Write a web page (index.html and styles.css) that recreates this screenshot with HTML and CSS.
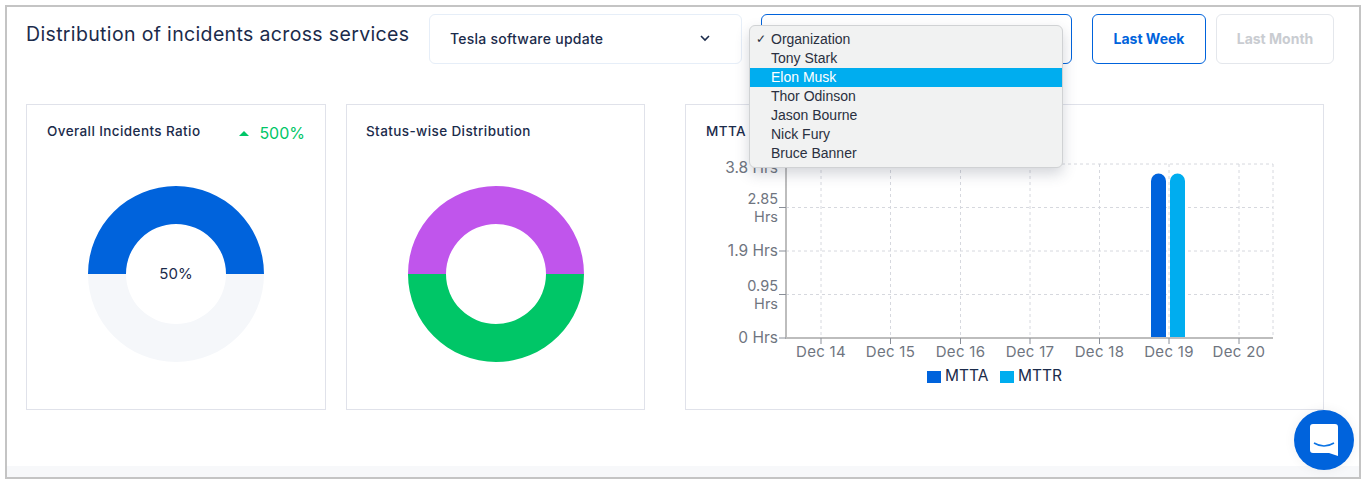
FILE: index.html
```html
<!DOCTYPE html>
<html lang="en">
<head>
  <meta charset="UTF-8">
  <title>Distribution of incidents across services</title>
  <link rel="stylesheet" href="styles.css">
</head>
<body>
<div class="frame">
  <div class="header">
    <h2 class="page-title">Distribution of incidents across services</h2>
    <div class="select select-service">
      <span>Tesla software update</span>
      <svg class="chevron" width="10" height="7" viewBox="0 0 10 7"><path d="M1 1l4 4 4-4" fill="none" stroke="#1b2b4b" stroke-width="1.6"/></svg>
    </div>
    <div class="select select-owner"></div>
    <button class="range range-active">Last Week</button>
    <button class="range">Last Month</button>
  </div>

  <ul class="popup">
    <li class="option option-checked">Organization</li>
    <li class="option">Tony Stark</li>
    <li class="option option-hover">Elon Musk</li>
    <li class="option">Thor Odinson</li>
    <li class="option">Jason Bourne</li>
    <li class="option">Nick Fury</li>
    <li class="option">Bruce Banner</li>
  </ul>

  <div class="cards">
    <div class="card card-ratio">
      <div class="card-head">
        <h3 class="card-title">Overall Incidents Ratio</h3>
        <span class="trend"><i class="trend-arrow"></i>500%</span>
      </div>
      <svg class="donut" width="176" height="176" viewBox="0 0 176 176">
        <path d="M0 88a88 88 0 0 1 176 0H138a50 50 0 0 0-100 0z" fill="#0063dc"/>
        <path d="M0 88a88 88 0 0 0 176 0H138a50 50 0 0 1-100 0z" fill="#f5f7fa"/>
        <text x="88" y="93" text-anchor="middle" class="donut-label">50%</text>
      </svg>
    </div>
    <div class="card card-status">
      <div class="card-head">
        <h3 class="card-title">Status-wise Distribution</h3>
      </div>
      <svg class="donut" width="176" height="176" viewBox="0 0 176 176">
        <path d="M0 88a88 88 0 0 1 176 0H138a50 50 0 0 0-100 0z" fill="#c055ec"/>
        <path d="M0 88a88 88 0 0 0 176 0H138a50 50 0 0 1-100 0z" fill="#00c667"/>
      </svg>
    </div>
    <div class="card card-trend">
      <div class="card-head">
        <h3 class="card-title">MTTA</h3>
      </div>
      <svg class="bars" width="630" height="240" viewBox="690 150 630 240">
        <g class="grid">
          <path d="M786 164H1273M786 207.500H1273M786 251H1273M786 294.500H1273"/>
          <path d="M821 164V338M890.500 164V338M960.500 164V338M1030 164V338M1099.500 164V338M1169 164V338M1239 164V338M1273 164V338"/>
        </g>
        <path class="axis" d="M786 164V338H1273"/>
        <path class="ticks" d="M779 164H786M779 207.500H786M779 251H786M779 294.500H786M779 338H786M821 338V344M890.500 338V344M960.500 338V344M1030 338V344M1099.500 338V344M1169 338V344M1239 338V344"/>
        <path d="M1151 337V181a7.500 7.500 0 0 1 15 0V337z" fill="#0063dc"/>
        <path d="M1170 337V181a7.500 7.500 0 0 1 15 0V337z" fill="#00adef"/>
        <g class="y-labels">
          <text x="778" y="173">3.8 Hrs</text>
          <text class="y-wrap" x="778" y="204">2.85</text>
          <text class="y-wrap" x="778" y="222">Hrs</text>
          <text x="778" y="256">1.9 Hrs</text>
          <text class="y-wrap" x="778" y="291">0.95</text>
          <text class="y-wrap" x="778" y="309">Hrs</text>
          <text x="778" y="343">0 Hrs</text>
        </g>
        <g class="x-labels">
          <text x="821" y="357">Dec 14</text>
          <text x="890.500" y="357">Dec 15</text>
          <text x="960.500" y="357">Dec 16</text>
          <text x="1030" y="357">Dec 17</text>
          <text x="1099.500" y="357">Dec 18</text>
          <text x="1169" y="357">Dec 19</text>
          <text x="1239" y="357">Dec 20</text>
        </g>
        <rect x="927" y="371" width="14" height="12" fill="#0063dc"/>
        <text class="legend" x="945" y="381">MTTA</text>
        <rect x="1000" y="371" width="14" height="12" fill="#00adef"/>
        <text class="legend" x="1018" y="381">MTTR</text>
      </svg>
    </div>
  </div>

  <div class="footer-strip"></div>
</div>

<div class="chat">
  <svg width="30" height="34" viewBox="0 0 30 34">
    <path d="M4 1h22a3 3 0 0 1 3 3v29l-9-3H4a3 3 0 0 1-3-3V4a3 3 0 0 1 3-3z" fill="#fff"/>
    <path d="M5 20q10 6 20 0" fill="none" stroke="#0b74e5" stroke-width="1.500"/>
  </svg>
</div>
</body>
</html>
```

FILE: styles.css
```css
* {
  box-sizing: border-box;
}
html, body {
  margin: 0;
  height: 483px;
  overflow: hidden;
  background: #fff;
  font-family: "Inter", "Open Sans", sans-serif;
  color: #1b2b4b;
}
.frame {
  position: relative;
  margin: 5px 6px 0 5px;
  height: 474px;
  border: 2px solid #c4c4c4;
  display: flex;
  flex-direction: column;
}

/* top row */
.header {
  display: flex;
  align-items: flex-start;
  padding: 7px 0 0 19px;
  height: 97px;
}
.page-title {
  margin: 6px 0 0;
  width: 403px;
  font-size: 19.500px;
  font-weight: 400;
  letter-spacing: 0.35px;
  line-height: 28px;
  white-space: nowrap;
}
.select {
  height: 50px;
  border: 1px solid #e6eef8;
  border-radius: 6px;
  display: flex;
  align-items: center;
  justify-content: space-between;
  font-size: 14px;
  font-weight: 500;
  letter-spacing: 0.25px;
}
.select-service {
  width: 313px;
  padding: 0 31px 2px 20px;
}
.select-owner {
  width: 311px;
  margin-left: 19px;
  border-color: #0063dc;
}
.range {
  height: 50px;
  width: 114px;
  margin-left: 20px;
  padding: 0 0 2px;
  background: #fff;
  border: 1px solid #e4e7ec;
  border-radius: 6px;
  font-family: inherit;
  font-size: 14px;
  font-weight: 700;
  color: #c9ccd1;
}
.range + .range {
  width: 118px;
  margin-left: 10px;
}
.range-active {
  border-color: #0063dc;
  color: #0063dc;
}

/* native looking dropdown */
.popup {
  position: absolute;
  left: 742px;
  top: 18px;
  width: 314px;
  margin: 0;
  padding: 4px 0;
  list-style: none;
  background: #f1f2f2;
  border: 1px solid #d0d2d4;
  border-radius: 6px;
  box-shadow: 0 6px 14px rgba(60, 70, 90, 0.22);
  font-family: "Liberation Sans", sans-serif;
  font-size: 14px;
  z-index: 5;
}
.option {
  height: 19px;
  line-height: 19px;
  padding-left: 21px;
  color: #2a3040;
  position: relative;
}
.option-checked::before {
  content: "✓";
  position: absolute;
  left: 6px;
  font-size: 12px;
}
.option-hover {
  background: #00adef;
  color: #fff;
}

/* cards */
.cards {
  display: flex;
  padding-left: 19px;
  flex: 1;
}
.card {
  height: 306px;
  border: 1px solid #e0e2ea;
}
.card-ratio {
  width: 300px;
}
.card-status {
  width: 299px;
  margin-left: 20px;
}
.card-trend {
  width: 639px;
  margin-left: 40px;
  position: relative;
}
.card-head {
  display: flex;
  justify-content: space-between;
  height: 81px;
  padding: 18px 20px 0;
}
.card-status .card-head {
  padding-left: 19px;
}
.card-title {
  margin: 0;
  font-size: 13.500px;
  font-weight: 500;
  letter-spacing: 0.4px;
  line-height: 16px;
}
.trend {
  font-size: 16px;
  line-height: 20px;
  color: #00c667;
  display: flex;
  align-items: center;
  height: 20px;
}
.trend-arrow {
  width: 0;
  height: 0;
  margin-right: 10px;
  border: 5px solid transparent;
  border-top: 0;
  border-bottom: 5px solid #00c667;
}
.donut {
  display: block;
  margin-left: 61px;
}
.donut-label {
  font-size: 15px;
  fill: #1b2b4b;
}
.bars {
  position: absolute;
  left: 4px;
  top: 45px;
}
.grid path {
  fill: none;
  stroke: #d6d8de;
  stroke-dasharray: 3 3;
}
.axis {
  fill: none;
  stroke: #bdbdbd;
  stroke-width: 2;
}
.ticks {
  fill: none;
  stroke: #8a8f98;
}
.y-labels text {
  font-size: 15.500px;
  fill: #6f7580;
  text-anchor: end;
}
.y-labels .y-wrap {
  font-size: 14.500px;
}
.x-labels text {
  font-size: 15px;
  letter-spacing: 0.3px;
  fill: #6f7580;
  text-anchor: middle;
}
.legend {
  font-size: 15.500px;
  fill: #1b2b4b;
}
.footer-strip {
  height: 11px;
  background: #f7f8fa;
}

.chat {
  position: absolute;
  left: 1294px;
  top: 410px;
  width: 60px;
  height: 60px;
  border-radius: 50%;
  background: #0063dc;
  box-shadow: 0 0 12px rgba(0, 0, 0, 0.06);
  display: flex;
  align-items: center;
  justify-content: center;
}
```
